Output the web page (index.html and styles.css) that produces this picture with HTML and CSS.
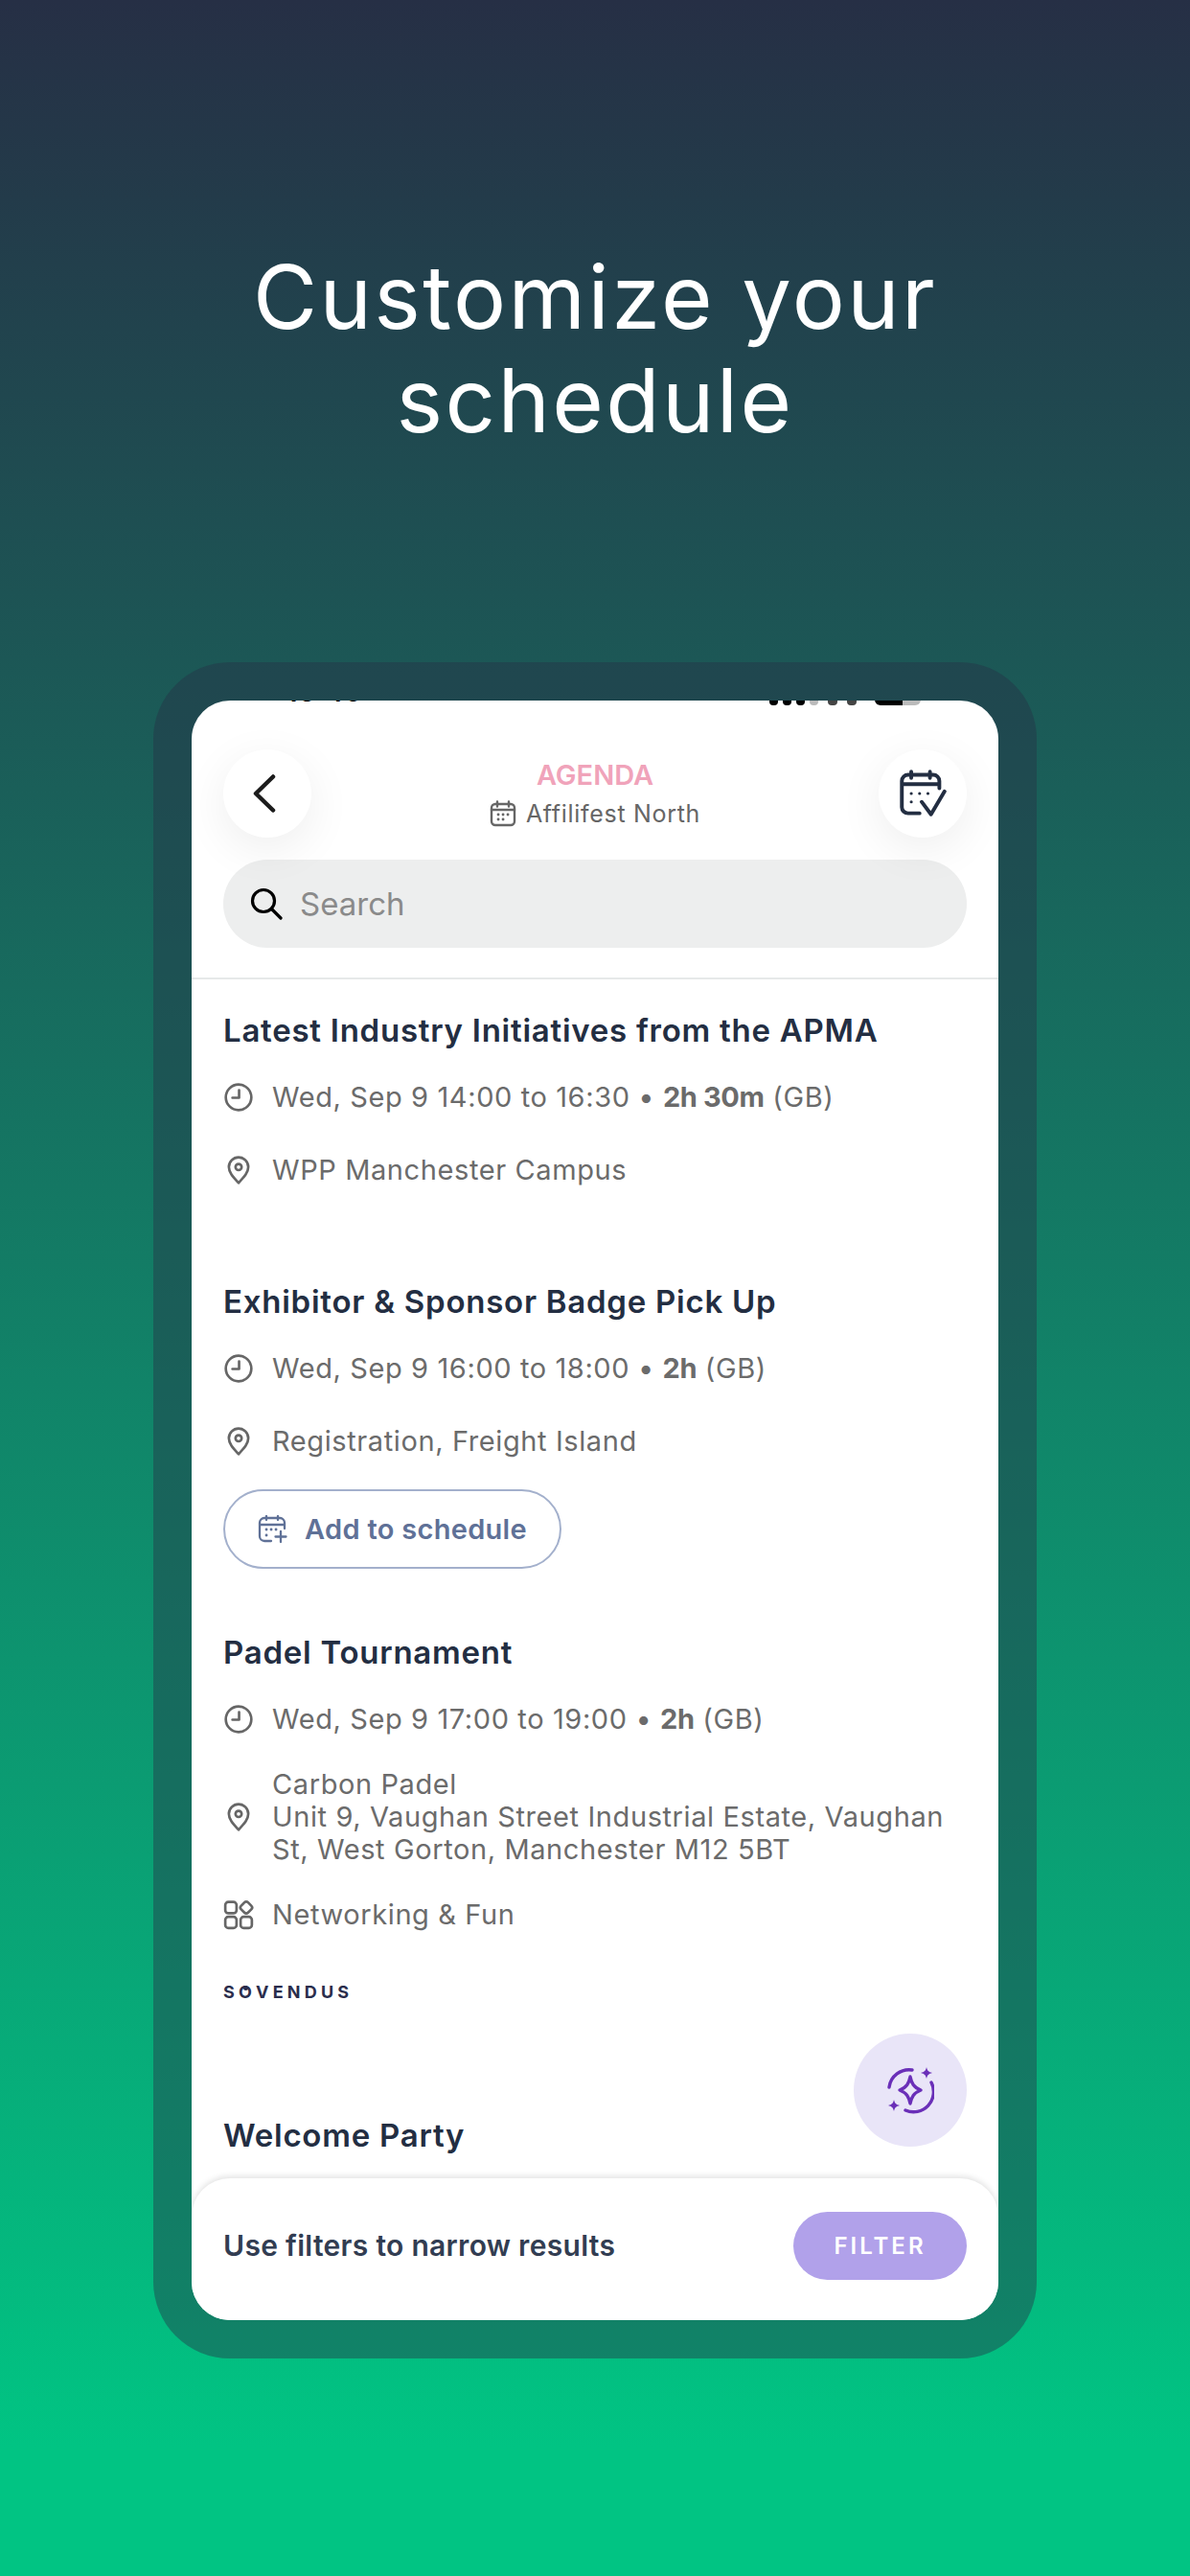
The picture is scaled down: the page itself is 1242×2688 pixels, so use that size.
FILE: index.html
```html
<!DOCTYPE html>
<html lang="en">
<head>
  <meta charset="UTF-8">
  <title>Customize your schedule</title>
  <link rel="stylesheet" href="styles.css">
</head>
<body>

  <h1 class="headline">Customize your<br>schedule</h1>

  <div class="phone">
    <div class="screen">

      <div class="status">
        <span class="status-time">15:46</span>
        <span class="status-icons">
          <span class="dot"></span><span class="dot"></span><span class="dot"></span><span class="dot dot-off"></span>
          <span class="wifi"></span><span class="wifi"></span>
          <span class="battery"></span>
        </span>
      </div>

      <header class="top">
        <div class="top-row">
          <button class="round-btn" aria-label="Back">
            <svg class="icon-back" viewBox="0 0 24 40"><path d="M21 2.500 3 20l18 17.500"/></svg>
          </button>
          <div class="top-title">
            <div class="agenda">AGENDA</div>
            <div class="event-name">
              <svg class="icon-cal" viewBox="0 0 28 28"><rect x="2" y="4" width="24" height="22" rx="4"/><path d="M2 10h24M8 1.500v5M20 1.500v5"/><path class="dots" d="M9 15h.1M14 15h.1M19 15h.1M9 20h.1M14 20h.1"/></svg>
              Affilifest North
            </div>
          </div>
          <button class="round-btn" aria-label="My schedule">
            <svg class="icon-calcheck" viewBox="0 0 46 46"><path d="M20 42H9a6 6 0 0 1-6-6V11a6 6 0 0 1 6-6h24a6 6 0 0 1 6 6v7M3 14h36M12 2v6M30 2v6"/><path d="M22 31l9 12 13-22"/><path class="dots" d="M12 23h.1M20 23h.1M28 23h.1M12 31h.1"/></svg>
          </button>
        </div>
        <div class="search">
          <svg class="icon-search" viewBox="0 0 34 34"><circle cx="14" cy="14" r="11.500"/><path d="m23 23 9 9"/></svg>
          <span>Search</span>
        </div>
      </header>

      <div class="list">

        <section class="event event-plain">
          <h2>Latest Industry Initiatives from the APMA</h2>
          <div class="row">
            <svg class="icon" viewBox="0 0 30 30"><circle cx="15" cy="15" r="12.500"/><path d="M15.500 8v7.500H9"/></svg>
            <span>Wed, Sep 9 14:00 to 16:30 • <b>2h 30m</b> (GB)</span>
          </div>
          <div class="row">
            <svg class="icon" viewBox="0 0 30 30"><path d="M15 27.500C9 21 5.500 17 5.500 12a9.500 9.500 0 0 1 19 0c0 5-3.500 9-9.500 15.500Z"/><circle cx="15" cy="12" r="3"/></svg>
            <span>WPP Manchester Campus</span>
          </div>
        </section>

        <section class="event">
          <h2>Exhibitor &amp; Sponsor Badge Pick Up</h2>
          <div class="row">
            <svg class="icon" viewBox="0 0 30 30"><circle cx="15" cy="15" r="12.500"/><path d="M15.500 8v7.500H9"/></svg>
            <span>Wed, Sep 9 16:00 to 18:00 • <b>2h</b> (GB)</span>
          </div>
          <div class="row">
            <svg class="icon" viewBox="0 0 30 30"><path d="M15 27.500C9 21 5.500 17 5.500 12a9.500 9.500 0 0 1 19 0c0 5-3.500 9-9.500 15.500Z"/><circle cx="15" cy="12" r="3"/></svg>
            <span>Registration, Freight Island</span>
          </div>
          <button class="add-btn">
            <svg class="icon-add" viewBox="0 0 32 30"><path d="M14 27H7a5 5 0 0 1-5-5V8a5 5 0 0 1 5-5h16a5 5 0 0 1 5 5v6M2 10h26M9 1v4M21 1v4M24 17v11M18.500 22.500h11"/><path class="dots" d="M9 15h.1M14 15h.1M19 15h.1M9 21h.1"/></svg>
            Add to schedule
          </button>
        </section>

        <section class="event event-sponsored">
          <h2>Padel Tournament</h2>
          <div class="row">
            <svg class="icon" viewBox="0 0 30 30"><circle cx="15" cy="15" r="12.500"/><path d="M15.500 8v7.500H9"/></svg>
            <span>Wed, Sep 9 17:00 to 19:00 • <b>2h</b> (GB)</span>
          </div>
          <div class="row">
            <svg class="icon" viewBox="0 0 30 30"><path d="M15 27.500C9 21 5.500 17 5.500 12a9.500 9.500 0 0 1 19 0c0 5-3.500 9-9.500 15.500Z"/><circle cx="15" cy="12" r="3"/></svg>
            <span>Carbon Padel<br>Unit 9, Vaughan Street Industrial Estate, Vaughan<br>St, West Gorton, Manchester M12 5BT</span>
          </div>
          <div class="row">
            <svg class="icon" viewBox="0 0 30 30"><rect x="2" y="2.500" width="11" height="11" rx="3"/><rect x="2" y="17" width="11" height="11" rx="3"/><rect x="17" y="17" width="11" height="11" rx="3"/><rect x="17.700" y="3.200" width="9.500" height="9.500" rx="2.500" transform="rotate(45 22.500 8)"/></svg>
            <span>Networking &amp; Fun</span>
          </div>
          <div class="sponsor">S<span class="sponsor-o">O</span>VENDUS</div>
        </section>

        <section class="event">
          <h2>Welcome Party</h2>
        </section>

      </div>

      <button class="fab" aria-label="Suggestions">
        <svg class="icon-spark" viewBox="0 0 50 50"><path d="M3 22A21 21 0 0 1 27 4M47 17a21 21 0 0 1-27 29"/><path d="M25 11c1.500 7 3.500 11 11 14-7.500 3-9.500 7-11 14-1.500-7-3.500-11-11-14 7.500-3 9.500-7 11-14Z"/><path class="spark-fill" d="M42 1c.8 3.500 2 5 6 6-4 1-5.200 2.500-6 6-.8-3.500-2-5-6-6 4-1 5.200-2.500 6-6ZM8 35c.8 3.500 2 5 6 6-4 1-5.200 2.500-6 6-.8-3.500-2-5-6-6 4-1 5.200-2.500 6-6Z"/></svg>
      </button>

      <div class="filter-bar">
        <span>Use filters to narrow results</span>
        <button class="filter-btn">FILTER</button>
      </div>

    </div>
  </div>

</body>
</html>
```

FILE: styles.css
```css
* {
  box-sizing: border-box;
}

html, body {
  margin: 0;
  padding: 0;
}

body {
  width: 1242px;
  height: 2688px;
  overflow: hidden;
  background: linear-gradient(180deg, #262f45 0%, #01c483 95%);
  font-family: Inter, "Open Sans", sans-serif;
  color: #666;
}

svg {
  fill: none;
  stroke-linecap: round;
  stroke-linejoin: round;
  flex: none;
}

button {
  font-family: inherit;
  border: none;
  padding: 0;
}

.headline {
  margin: 0;
  padding-top: 256px;
  height: 691px;
  text-align: center;
  font-size: 92px;
  line-height: 108px;
  font-weight: 400;
  letter-spacing: 2.400px;
  color: #fff;
}

.phone {
  width: 922px;
  height: 1770px;
  margin-left: 160px;
  padding: 40px;
  border-radius: 80px;
  background: rgba(38, 47, 69, .42);
}

.screen {
  position: relative;
  height: 1690px;
  overflow: hidden;
  border-radius: 40px;
  background: #fff;
}

.status {
  height: 5px;
  overflow: hidden;
  display: flex;
  align-items: flex-end;
  justify-content: space-between;
  padding: 0 81px 0 98px;
}

.status-time {
  font-size: 30px;
  line-height: 30px;
  font-weight: 600;
  color: #000;
}

.status-icons {
  display: flex;
  align-items: flex-end;
  gap: 5px;
}

.dot {
  width: 9px;
  height: 14px;
  background: #000;
  border-radius: 4px;
}

.dot-off {
  background: #bbb;
}

.wifi {
  width: 10px;
  height: 10px;
  margin-left: 5px;
  background: #444;
  border-radius: 4px;
}

.battery {
  width: 48px;
  height: 14px;
  margin-left: 14px;
  border-radius: 6px;
  background: linear-gradient(90deg, #000 60%, #bbb 60%);
}

.top {
  padding: 46px 33px 31px;
  border-bottom: 2px solid #e6e9e9;
}

.top-row {
  display: flex;
  justify-content: space-between;
  align-items: flex-start;
}

.round-btn {
  width: 92px;
  height: 92px;
  border-radius: 50%;
  background: #fff;
  box-shadow: 0 12px 48px rgba(0, 0, 0, .07);
  display: flex;
  align-items: center;
  justify-content: center;
}

.icon-back {
  width: 24px;
  height: 40px;
  margin-right: 6px;
  stroke: #1c1c1c;
  stroke-width: 4.500;
}

.icon-calcheck {
  width: 50px;
  height: 50px;
  stroke: #232e42;
  stroke-width: 3.600;
}

.top-title {
  text-align: center;
}

.agenda {
  margin-top: 10px;
  font-size: 29px;
  line-height: 34px;
  font-weight: 600;
  color: #f0a3ba;
}

.event-name {
  margin-top: 6px;
  display: flex;
  align-items: center;
  justify-content: center;
  gap: 10px;
  font-size: 25px;
  line-height: 34px;
  letter-spacing: .7px;
}

.icon-cal {
  width: 28px;
  height: 28px;
  stroke: #666;
  stroke-width: 2.400;
}

.dots {
  stroke-width: 2.800;
}

.search {
  height: 92px;
  margin-top: 23px;
  padding-left: 28px;
  display: flex;
  align-items: center;
  gap: 18px;
  border-radius: 46px;
  background: #edeeee;
  font-size: 33px;
  color: #8a8a8a;
}

.icon-search {
  width: 34px;
  height: 34px;
  stroke: #000;
  stroke-width: 3.200;
}

.list {
  padding: 33px 33px 0;
}

.event {
  padding-bottom: 67px;
}

.event-plain {
  padding-bottom: 82px;
}

.event-sponsored {
  padding-bottom: 122px;
}

.event h2 {
  margin: 0 0 15px;
  font-size: 33px;
  line-height: 40px;
  font-weight: 600;
  letter-spacing: .75px;
  color: #232e42;
}

.row {
  min-height: 70px;
  margin-top: 6px;
  padding: 10px 0;
  display: flex;
  align-items: center;
  gap: 19px;
  font-size: 29px;
  line-height: 34px;
  letter-spacing: .6px;
  color: #6b6b6b;
}

.icon {
  width: 32px;
  height: 32px;
  stroke: #666;
  stroke-width: 2.500;
}

.row b {
  font-weight: 700;
  letter-spacing: -.4px;
}

.add-btn {
  width: 353px;
  height: 83px;
  margin-top: 15px;
  display: flex;
  align-items: center;
  justify-content: center;
  gap: 17px;
  background: #fff;
  border: 2px solid #a3b0cc;
  border-radius: 42px;
  font-size: 29px;
  font-weight: 600;
  letter-spacing: .3px;
  color: #5f7197;
}

.icon-add {
  width: 32px;
  height: 30px;
  stroke: #5f7197;
  stroke-width: 2.300;
}

.sponsor {
  margin-top: 39px;
  font-size: 18px;
  line-height: 14px;
  font-weight: 700;
  letter-spacing: 4.200px;
  color: #2a2d4c;
}

.sponsor-o {
  position: relative;
}

.sponsor-o::after {
  content: "";
  position: absolute;
  left: 5px;
  top: 4px;
  width: 5px;
  height: 5px;
  border-radius: 50%;
  background: #2a2d4c;
}

.fab {
  position: absolute;
  right: 33px;
  bottom: 181px;
  width: 118px;
  height: 118px;
  border-radius: 50%;
  background: #e9e5f8;
  display: flex;
  align-items: center;
  justify-content: center;
}

.icon-spark {
  width: 50px;
  height: 50px;
  stroke: #6a2fb8;
  stroke-width: 3.400;
}

.spark-fill {
  fill: #6a2fb8;
  stroke: none;
}

.filter-bar {
  position: absolute;
  left: 0;
  right: 0;
  bottom: 0;
  height: 148px;
  padding: 0 33px 8px;
  display: flex;
  align-items: center;
  justify-content: space-between;
  background: #fff;
  border-radius: 40px 40px 0 0;
  box-shadow: 0 -2px 6px rgba(0, 0, 0, .12);
  font-size: 30px;
  font-weight: 600;
  letter-spacing: .3px;
  color: #323d52;
}

.filter-btn {
  width: 181px;
  height: 71px;
  border-radius: 36px;
  background: #b1a1ea;
  color: #fff;
  font-size: 24px;
  font-weight: 600;
  letter-spacing: 3px;
}
```
